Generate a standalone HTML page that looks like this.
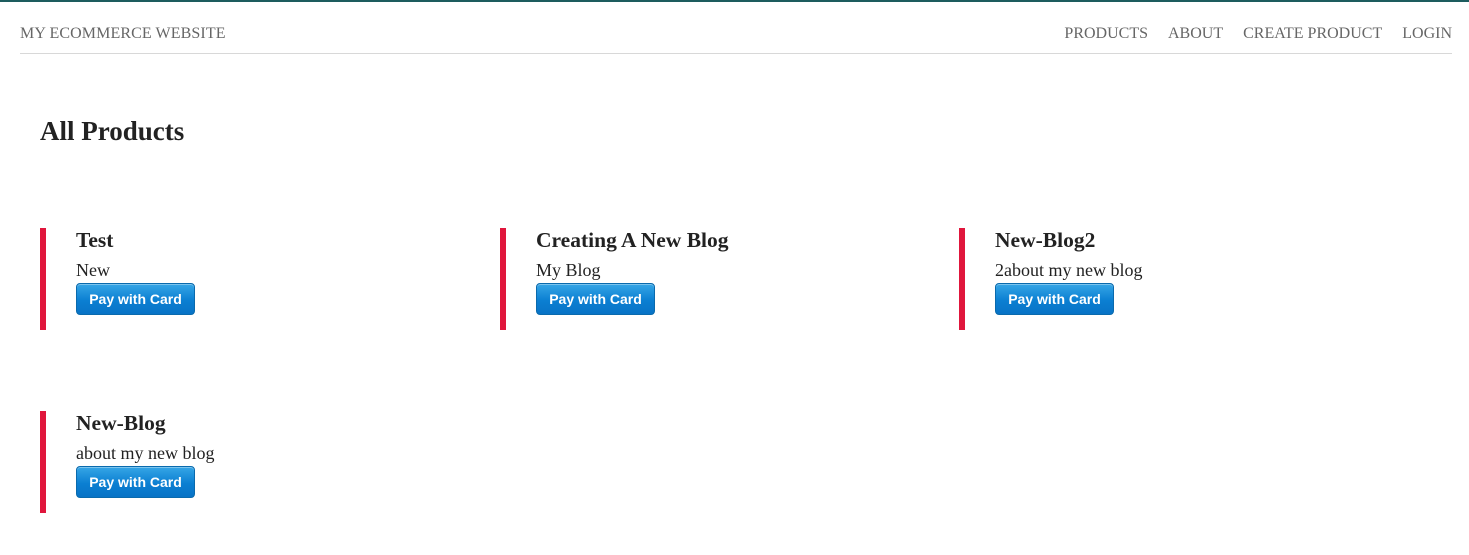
<!DOCTYPE html>
<html><head><meta charset="utf-8"><style>
*{margin:0;padding:0;box-sizing:border-box}
body{width:1469px;height:555px;background:#fff;font-family:"Liberation Serif",serif;color:#222;border-top:2px solid #1d5c5e;position:relative;overflow:hidden}
.nav{position:absolute;left:20px;right:17px;top:0;height:52px;border-bottom:1px solid #d8d8d8}
.brand{position:absolute;left:0;top:23px;font-size:16px;color:#666;letter-spacing:0.1px}
.links{position:absolute;right:0;top:23px;font-size:16px;color:#666}
.links span{margin-left:20px}
h1{position:absolute;left:40px;top:114px;font-size:27px;font-weight:bold;color:#222}
.card{position:absolute;width:420px;height:102px;border-left:6px solid #e0163c}
.card h2{position:absolute;left:30px;top:0px;font-size:21.5px;font-weight:bold;white-space:nowrap}
.card p{position:absolute;left:30px;top:32px;font-size:18px;white-space:nowrap}
.btn{position:absolute;left:30px;top:55px;width:119px;height:32px;border-radius:4px;border:1px solid #0a6aad;background:linear-gradient(#36a6e6,#0b7fd2 55%,#0873c6);color:#fff;font-family:"Liberation Sans",sans-serif;font-weight:bold;font-size:14px;text-align:center;line-height:30px;box-shadow:inset 0 1px 0 rgba(255,255,255,.35)}
</style></head><body>
<div class="nav"><div class="brand">MY ECOMMERCE WEBSITE</div>
<div class="links"><span>PRODUCTS</span><span>ABOUT</span><span>CREATE PRODUCT</span><span>LOGIN</span></div></div>
<h1>All Products</h1>
<div class="card" style="left:40px;top:226px"><h2>Test</h2><p>New</p><div class="btn">Pay with Card</div></div>
<div class="card" style="left:500px;top:226px"><h2>Creating A New Blog</h2><p>My Blog</p><div class="btn">Pay with Card</div></div>
<div class="card" style="left:959px;top:226px"><h2>New-Blog2</h2><p>2about my new blog</p><div class="btn">Pay with Card</div></div>
<div class="card" style="left:40px;top:409px"><h2>New-Blog</h2><p>about my new blog</p><div class="btn">Pay with Card</div></div>
</body></html>
